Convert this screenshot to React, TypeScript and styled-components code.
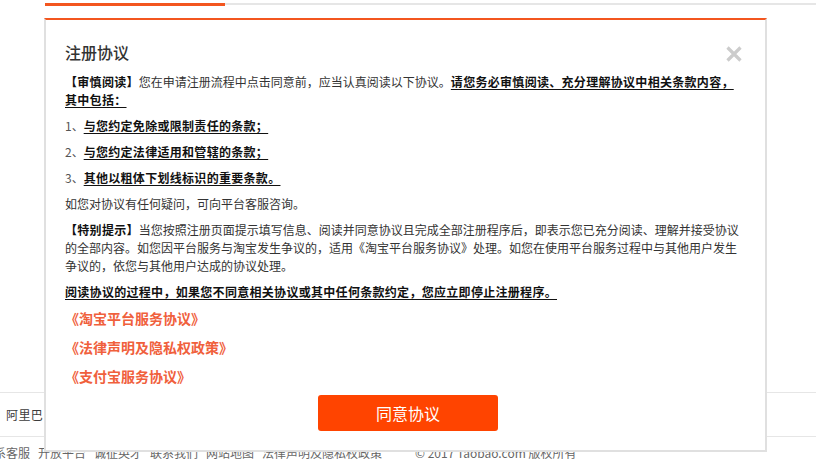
import React from "react";
import styled, { createGlobalStyle } from "styled-components";

const GlobalStyle = createGlobalStyle`
  html, body {
    margin: 0;
    padding: 0;
    background: #ffffff;
  }
  body {
    font-family: "Noto Sans CJK SC", "Microsoft YaHei", sans-serif;
  }
`;

const Page = styled.div`
  position: relative;
  width: 816px;
  height: 466px;
  overflow: hidden;
  font-family: "Noto Sans CJK SC", "Microsoft YaHei", sans-serif;
`;

const TabBar = styled.div`
  display: flex;
  align-items: flex-start;
  height: 3px;
  padding: 3px 0 0 45px;
`;

const ActiveTab = styled.div`
  width: 180px;
  height: 3px;
  background: #f3561f;
`;

const TabRest = styled.div`
  flex: 1;
  height: 2px;
  background: #e6e6e6;
`;

const Main = styled.div`
  height: 386px;
`;

const FriendRow = styled.div`
  display: flex;
  align-items: center;
  height: 43px;
  padding-left: 6px;
  border-top: 1px solid #e6e6e6;
  border-bottom: 1px solid #e6e6e6;
  font-size: 12px;
  color: #3c3c3c;
  white-space: nowrap;
  gap: 10px;
`;

const FriendLink = styled.span`
  letter-spacing: 0.4px;
`;

const Footer = styled.div`
  display: flex;
  padding-top: 7px;
  font-size: 12px;
  line-height: 18px;
  color: #666;
  white-space: nowrap;
`;

const FooterLinks = styled.div`
  flex-shrink: 0;
  width: 382px;
  display: flex;
  justify-content: flex-end;
  gap: 8px;
  overflow: hidden;
`;

const Copyright = styled.span`
  margin-left: 33px;
`;

const Modal = styled.div`
  position: absolute;
  left: 44px;
  top: 18px;
  width: 723px;
  box-sizing: border-box;
  background: #fff;
  border: 2px solid #e0e0e0;
  border-top: 2px solid #f3561f;
  padding: 20px 20px 19px 19px;
`;

const Title = styled.h3`
  margin: 0 0 9px;
  font-size: 16px;
  line-height: 24px;
  font-weight: 500;
  color: #333;
`;

const CloseButton = styled.button`
  position: absolute;
  top: 26px;
  right: 23px;
  width: 16px;
  height: 16px;
  padding: 0;
  border: 0;
  background: none;
  cursor: pointer;
  display: block;
`;

const P = styled.p`
  margin: 0 0 8px;
  font-size: 12px;
  line-height: 18px;
  color: #333;
`;

const Tag = styled.strong`
  font-weight: bold;
  color: #111;
  letter-spacing: 0.3px;
`;

const Num = styled.span`
  color: #555;
`;

const Key = styled.span`
  font-weight: bold;
  color: #111;
  letter-spacing: 0.3px;
  text-decoration: underline;
  text-underline-offset: 2px;
`;

const LinkList = styled.div`
  margin-top: -5px;
  display: flex;
  flex-direction: column;
  align-items: flex-start;
`;

const AgreementLink = styled.a`
  font-size: 14px;
  line-height: 29px;
  font-weight: bold;
  color: #f0603c;
  text-decoration: none;
  cursor: pointer;
`;

const ButtonRow = styled.div`
  display: flex;
  justify-content: center;
  margin-top: 4px;
  padding-left: 6px;
`;

const AgreeButton = styled.button`
  width: 180px;
  height: 36px;
  border: 0;
  border-radius: 3px;
  background: #ff4400;
  color: #fff;
  font-size: 16px;
  font-family: inherit;
  cursor: pointer;
`;

const footerLinks = [
  "关于淘宝",
  "合作伙伴",
  "营销中心",
  "廉正举报",
  "联系客服",
  "开放平台",
  "诚征英才",
  "联系我们",
  "网站地图",
  "法律声明及隐私权政策",
];

const agreements = ["《淘宝平台服务协议》", "《法律声明及隐私权政策》", "《支付宝服务协议》"];

export default function App() {
  return (
    <Page>
      <GlobalStyle />
      <TabBar>
        <ActiveTab />
        <TabRest />
      </TabBar>
      <Main />
      <FriendRow>
        <FriendLink>阿里巴巴集团</FriendLink>
        <FriendLink>淘宝网</FriendLink>
        <FriendLink>天猫</FriendLink>
        <FriendLink>聚划算</FriendLink>
      </FriendRow>
      <Footer>
        <FooterLinks>
          {footerLinks.map((t) => (
            <span key={t}>{t}</span>
          ))}
        </FooterLinks>
        <Copyright>© 2017 Taobao.com 版权所有</Copyright>
      </Footer>

      <Modal>
        <Title>注册协议</Title>
        <CloseButton aria-label="关闭">
          <svg width="16" height="16" viewBox="0 0 16 16">
            <path d="M1.5 1.5 L14.5 14.5 M14.5 1.5 L1.5 14.5" stroke="#cccccc" strokeWidth="3.2" />
          </svg>
        </CloseButton>
        <P>
          <Tag>【审慎阅读】</Tag>您在申请注册流程中点击同意前，应当认真阅读以下协议。
          <Key>请您务必审慎阅读、充分理解协议中相关条款内容，其中包括：</Key>
        </P>
        <P>
          <Num>1、</Num>
          <Key>与您约定免除或限制责任的条款；</Key>
        </P>
        <P>
          <Num>2、</Num>
          <Key>与您约定法律适用和管辖的条款；</Key>
        </P>
        <P>
          <Num>3、</Num>
          <Key>其他以粗体下划线标识的重要条款。</Key>
        </P>
        <P>如您对协议有任何疑问，可向平台客服咨询。</P>
        <P>
          <Tag>【特别提示】</Tag>
          当您按照注册页面提示填写信息、阅读并同意协议且完成全部注册程序后，即表示您已充分阅读、理解并接受协议的全部内容。如您因平台服务与淘宝发生争议的，适用《淘宝平台服务协议》处理。如您在使用平台服务过程中与其他用户发生争议的，依您与其他用户达成的协议处理。
        </P>
        <P>
          <Key>阅读协议的过程中，如果您不同意相关协议或其中任何条款约定，您应立即停止注册程序。</Key>
        </P>
        <LinkList>
          {agreements.map((a) => (
            <AgreementLink key={a}>{a}</AgreementLink>
          ))}
        </LinkList>
        <ButtonRow>
          <AgreeButton>同意协议</AgreeButton>
        </ButtonRow>
      </Modal>
    </Page>
  );
}
